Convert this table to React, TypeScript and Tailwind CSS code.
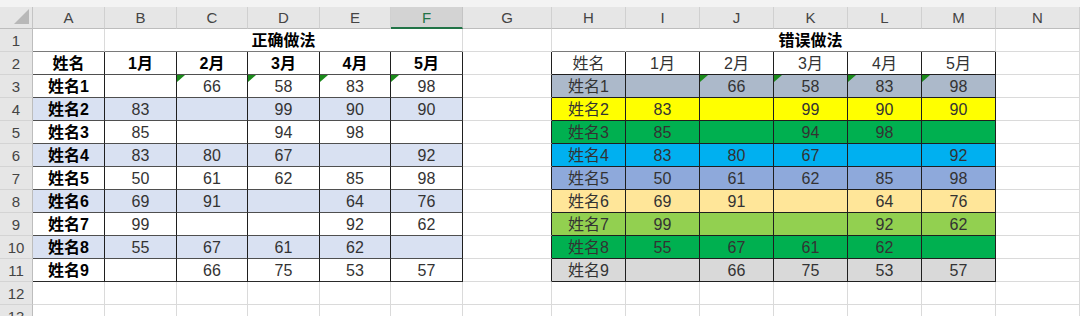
import React from "react";

const letters = ["A", "B", "C", "D", "E", "F", "G", "H", "I", "J", "K", "L", "M", "N"];
const months = ["1月", "2月", "3月", "4月", "5月"];
const names = ["姓名1", "姓名2", "姓名3", "姓名4", "姓名5", "姓名6", "姓名7", "姓名8", "姓名9"];

const scores: (number | null)[][] = [
  [null, 66, 58, 83, 98],
  [83, null, 99, 90, 90],
  [85, null, 94, 98, null],
  [83, 80, 67, null, 92],
  [50, 61, 62, 85, 98],
  [69, 91, null, 64, 76],
  [99, null, null, 92, 62],
  [55, 67, 61, 62, null],
  [null, 66, 75, 53, 57],
];

// fills of the "wrong way" table, rows 3..11
const rightFills = [
  "bg-[#acb9ca]",
  "bg-[#ffff00]",
  "bg-[#00b050]",
  "bg-[#00b0f0]",
  "bg-[#8ea9db]",
  "bg-[#ffe699]",
  "bg-[#92d050]",
  "bg-[#00b050]",
  "bg-[#d9d9d9]",
];

const inLeft = (r: number, c: number) => r >= 2 && r <= 11 && c >= 1 && c <= 6;
const inRight = (r: number, c: number) => r >= 2 && r <= 11 && c >= 8 && c <= 13;

const Flag = () => (
  <svg className="absolute left-0 top-0" width="8" height="7" viewBox="0 0 8 7">
    <polygon points="0,0 8,0 0,7" fill="#1b8a1b" />
  </svg>
);

function cellText(r: number, c: number): { text: string; bold: boolean } {
  if (r === 1) {
    if (c === 2) return { text: "正确做法", bold: true };
    if (c === 9) return { text: "错误做法", bold: true };
    return { text: "", bold: false };
  }
  if (r === 2) {
    if (c === 1) return { text: "姓名", bold: true };
    if (c >= 2 && c <= 6) return { text: months[c - 2], bold: true };
    if (c === 8) return { text: "姓名", bold: false };
    if (c >= 9 && c <= 13) return { text: months[c - 9], bold: false };
  }
  if (r >= 3 && r <= 11) {
    const i = r - 3;
    if (c === 1) return { text: names[i], bold: true };
    if (c === 8) return { text: names[i], bold: false };
    if (c >= 2 && c <= 6) return { text: scores[i][c - 2]?.toString() ?? "", bold: false };
    if (c >= 9 && c <= 13) return { text: scores[i][c - 9]?.toString() ?? "", bold: false };
  }
  return { text: "", bold: false };
}

function SheetCell({ r, c }: { r: number; c: number }) {
  const { text, bold } = cellText(r, c);
  const span = r === 1 && (c === 2 || c === 9) ? "col-span-5" : "";

  let bg = "bg-white";
  if (inLeft(r, c) && r >= 4 && r % 2 === 0) bg = "bg-[#d9e1f2]";
  if (inRight(r, c) && r >= 3) bg = rightFills[r - 3];

  let right = "border-r-[#dadada]";
  if (inLeft(r, c) || inRight(r, c) || inRight(r, c + 1)) right = "border-r-[#1f1f1f]";
  if (r === 1 && c === 8) right = "border-r-white";

  let bottom = "border-b-[#dadada]";
  if (r === 1 && (c <= 6 || (c >= 8 && c <= 13))) bottom = "border-b-[#7a7a7a]";
  else if (inLeft(r, c)) bottom = r === 11 ? "border-b-[#2a2a2a]" : "border-b-[#4f4f4f]";
  else if (inRight(r, c)) bottom = "border-b-[#1f1f1f]";

  const flagged = r === 3 && ((c >= 3 && c <= 6) || (c >= 10 && c <= 13));

  return (
    <div
      className={`relative flex items-center justify-center border-r border-b pt-[2px] text-[16px] leading-none ${span} ${bg} ${right} ${bottom} ${
        bold ? "font-bold text-black" : "text-[#333333]"
      }`}
    >
      {flagged && <Flag />}
      {text}
    </div>
  );
}

export default function App() {
  const rows = Array.from({ length: 13 }, (_, i) => i + 1);
  const cols = Array.from({ length: 15 }, (_, i) => i);

  return (
    <div className="h-[316px] w-[1080px] overflow-hidden bg-white font-['Liberation_Sans','Noto_Sans_CJK_SC',sans-serif]">
      <div className="h-[7px] bg-[#f3f3f3]" />
      <div className="grid grid-cols-[33px_72px_72px_71px_72px_71px_72px_89px_74px_74px_74px_74px_74px_74px_84px] grid-rows-[22px_repeat(13,23px)]">
        {/* column header row */}
        <div className="relative border-r border-b border-r-[#c4c4c4] border-b-[#bdbdbd] bg-[#e6e6e6]">
          <svg className="absolute bottom-[4px] right-[3px]" width="15" height="15" viewBox="0 0 15 15">
            <polygon points="15,0 15,15 0,15" fill="#b8b8b8" />
          </svg>
        </div>
        {letters.map((l) =>
          l === "F" ? (
            <div
              key={l}
              className="flex items-center justify-center border-r border-b-2 border-r-[#c4c4c4] border-b-[#217346] bg-[#d3d3d3] pt-[2px] text-[15px] text-[#217346]"
            >
              {l}
            </div>
          ) : (
            <div
              key={l}
              className="flex items-center justify-center border-r border-b border-r-[#d0d0d0] border-b-[#bdbdbd] bg-[#e6e6e6] pt-[1px] text-[15px] text-[#444444]"
            >
              {l}
            </div>
          )
        )}

        {rows.map((r) =>
          cols.map((c) => {
            if (c === 0) {
              return (
                <div
                  key={`${r}-${c}`}
                  className="flex items-center justify-center border-r border-b border-r-[#bdbdbd] border-b-[#d4d4d4] bg-[#e6e6e6] pt-[2px] text-[15px] text-[#444444]"
                >
                  {r}
                </div>
              );
            }
            if (r === 1 && ((c >= 3 && c <= 6) || (c >= 10 && c <= 13))) return null;
            return <SheetCell key={`${r}-${c}`} r={r} c={c} />;
          })
        )}
      </div>
    </div>
  );
}
